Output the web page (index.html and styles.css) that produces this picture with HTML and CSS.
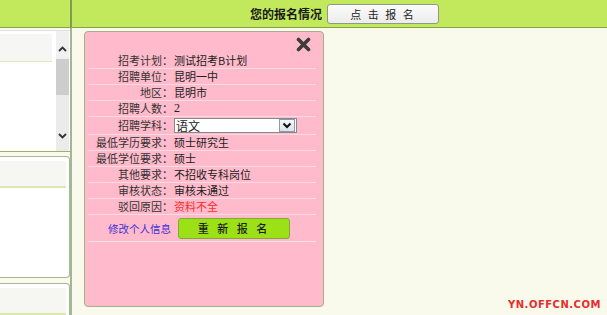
FILE: index.html
```html
<!DOCTYPE html>
<html>
<head>
<meta charset="utf-8">
<link rel="stylesheet" href="styles.css">
</head>
<body>
<div class="top">
  <div class="top-left"></div>
  <div class="top-right">
    <span class="title">您的报名情况</span>
    <button class="btn-top">点 击 报 名</button>
  </div>
</div>
<div class="main">
  <div class="side">
    <div class="panel1">
      <div class="p1-list"><div class="p1-head"></div></div>
      <div class="scroll">
        <div class="sc-btn"><svg width="9" height="6" viewBox="0 0 9 6"><path d="M1 5 L4.5 1.5 L8 5" fill="none" stroke="#333" stroke-width="1.8"/></svg></div>
        <div class="sc-thumb"></div>
        <div class="sc-track"></div>
        <div class="sc-btn down"><svg width="9" height="6" viewBox="0 0 9 6"><path d="M1 1 L4.5 4.5 L8 1" fill="none" stroke="#333" stroke-width="1.8"/></svg></div>
      </div>
    </div>
    <div class="panel2"><div class="p2-head"></div></div>
    <div class="panel3"><div class="p2-head"></div></div>
  </div>
  <div class="content">
    <div class="popup">
      <div class="pop-head"><svg class="close" width="15" height="15" viewBox="0 0 15 15"><path d="M2.5 2.5 L12.5 12.5 M12.5 2.5 L2.5 12.5" stroke="#3c3c3c" stroke-width="3.6" stroke-linecap="round"/></svg></div>
      <div class="row"><span class="lbl">招考计划：</span><span class="val">测试招考B计划</span></div>
      <div class="row"><span class="lbl">招聘单位：</span><span class="val">昆明一中</span></div>
      <div class="row"><span class="lbl">地区：</span><span class="val">昆明市</span></div>
      <div class="row"><span class="lbl">招聘人数：</span><span class="val num">2</span></div>
      <div class="row sel-row"><span class="lbl">招聘学科：</span><span class="val"><span class="select"><span class="sel-text">语文</span><span class="sel-arrow"><svg width="10" height="7" viewBox="0 0 10 7"><path d="M1.5 1.5 L5 5 L8.5 1.5" fill="none" stroke="#111" stroke-width="2"/></svg></span></span></span></div>
      <div class="row"><span class="lbl">最低学历要求：</span><span class="val">硕士研究生</span></div>
      <div class="row"><span class="lbl">最低学位要求：</span><span class="val">硕士</span></div>
      <div class="row"><span class="lbl">其他要求：</span><span class="val">不招收专科岗位</span></div>
      <div class="row"><span class="lbl">审核状态：</span><span class="val">审核未通过</span></div>
      <div class="row"><span class="lbl">驳回原因：</span><span class="val red">资料不全</span></div>
      <div class="row btn-row"><span class="lbl"><a class="link">修改个人信息</a></span><span class="val"><button class="btn-green">重 新 报 名</button></span></div>
    </div>
  </div>
</div>
<div class="logo">YN.OFFCN.COM</div>
</body>
</html>
```
FILE: styles.css
```css
html, body {
  margin: 0;
  padding: 0;
}
body {
  width: 607px;
  height: 315px;
  overflow: hidden;
  background: #fafaec;
  font-family: "Noto Sans CJK SC", "Liberation Sans", sans-serif;
  font-size: 12px;
  color: #222;
  position: relative;
}
.top {
  display: flex;
  height: 27px;
  background: #c2e95c;
  border-bottom: 1px solid #86a24e;
}
.top-left {
  width: 70px;
  border-right: 2px solid #7f9d52;
}
.top-right {
  flex: 1;
  display: flex;
  align-items: center;
  padding-left: 178px;
}
.title {
  font-weight: bold;
  font-size: 12px;
  color: #1a1a1a;
  white-space: nowrap;
  width: 77px;
}
.btn-top {
  width: 112px;
  height: 20px;
  margin-top: 1px;
  border: 1px solid #8e9a86;
  border-radius: 3px;
  background: linear-gradient(#fbfbfb, #ececec);
  font-family: "Noto Sans CJK SC", sans-serif;
  font-size: 11px;
  letter-spacing: 2px;
  color: #222;
  padding: 0;
}
.main {
  display: flex;
  height: 287px;
}
.side {
  width: 70px;
  border-right: 2px solid #a6b596;
  background: #fafaec;
  display: flex;
  flex-direction: column;
}
.panel1 {
  margin-top: 2px;
  height: 123px;
  display: flex;
  background: #fff;
  border-top: 1px solid #e2e2e2;
  border-bottom: 1px solid #9bb070;
}
.p1-list {
  width: 56px;
}
.p1-head {
  margin-top: 3px;
  height: 27px;
  width: 52px;
  background: #f6f6f4;
  border-bottom: 1px solid #dfe8b8;
}
.scroll {
  width: 13px;
  margin-right: 1px;
  display: flex;
  flex-direction: column;
  background: #ebebeb;
}
.sc-btn {
  height: 28px;
  background: #f0f0f0;
  display: flex;
  justify-content: center;
  align-items: center;
  padding-top: 8px;
  box-sizing: border-box;
}
.sc-btn.down {
  height: 26px;
  padding-top: 0;
  padding-bottom: 4px;
  background: #ebebeb;
}
.sc-thumb {
  height: 36px;
  background: #cdcdcd;
}
.sc-track {
  flex: 1;
}
.panel2 {
  margin-top: 4px;
  height: 124px;
  background: #fff;
  border: 1px solid #a8b898;
  border-left: none;
  border-radius: 0 4px 4px 0;
}
.panel3 {
  margin-top: 5px;
  flex: 1;
  background: #fff;
  border: 1px solid #a8b898;
  border-left: none;
  border-bottom: none;
  border-radius: 0 4px 0 0;
}
.p2-head {
  margin-top: 4px;
  height: 25px;
  width: 66px;
  background: #f6f6f2;
  border-bottom: 2px solid #dce8b0;
}
.content {
  flex: 1;
  padding: 3px 0 0 12px;
}
.popup {
  background: #ffbacb;
  border: 1px solid #a4ae88;
  border-radius: 4px;
  padding: 0 7px 0 3px;
  box-sizing: border-box;
  width: 240px;
  height: 276px;
}
.pop-head {
  height: 21px;
  position: relative;
}
.close {
  position: absolute;
  right: 5px;
  top: 5px;
}
.row {
  display: flex;
  height: 15px;
  line-height: 15px;
  border-bottom: 1px solid #f6dbe2;
  font-size: 11px;
}
.lbl {
  width: 85px;
  text-align: right;
  padding-right: 1px;
  color: #333;
  white-space: nowrap;
}
.val {
  color: #222;
  white-space: nowrap;
}
.num {
  font-family: "Liberation Serif", serif;
  font-size: 12px;
}
.red {
  color: #ff2a2a;
}
.sel-row {
  height: 17px;
  line-height: 17px;
}
.select {
  display: flex;
  margin-top: 1px;
  width: 123px;
  height: 15px;
  background: #fff;
  border: 1px solid #8a8a8a;
  box-sizing: border-box;
  justify-content: space-between;
  align-items: center;
}
.sel-text {
  padding-left: 1px;
  line-height: 13px;
  font-size: 12px;
}
.sel-arrow {
  width: 14px;
  height: 11px;
  margin-right: 1px;
  border: 1px solid #8a9aaa;
  background: linear-gradient(#f4f6f8, #dde2e8);
  display: flex;
  align-items: center;
  justify-content: center;
}
.btn-row {
  height: 26px;
  align-items: center;
  border-bottom: 1px solid #f8e2e8;
}
.btn-row .lbl {
  padding-right: 0;
}
.link {
  color: #3b31d8;
  font-size: 10.5px;
  margin-right: 2px;
}
.btn-green {
  margin-left: 5px;
  width: 112px;
  height: 21px;
  padding: 0;
  background: #9ce016;
  border: 1px solid #80a83c;
  border-radius: 3px;
  font-family: "Noto Sans CJK SC", sans-serif;
  font-size: 11px;
  letter-spacing: 3px;
  color: #1c1c1c;
  font-weight: 500;
}
.logo {
  position: absolute;
  left: 508px;
  top: 299px;
  color: #e82c2c;
  font-family: "DejaVu Sans", sans-serif;
  font-weight: bold;
  font-size: 10px;
  letter-spacing: 0.5px;
  line-height: 12px;
}
```
